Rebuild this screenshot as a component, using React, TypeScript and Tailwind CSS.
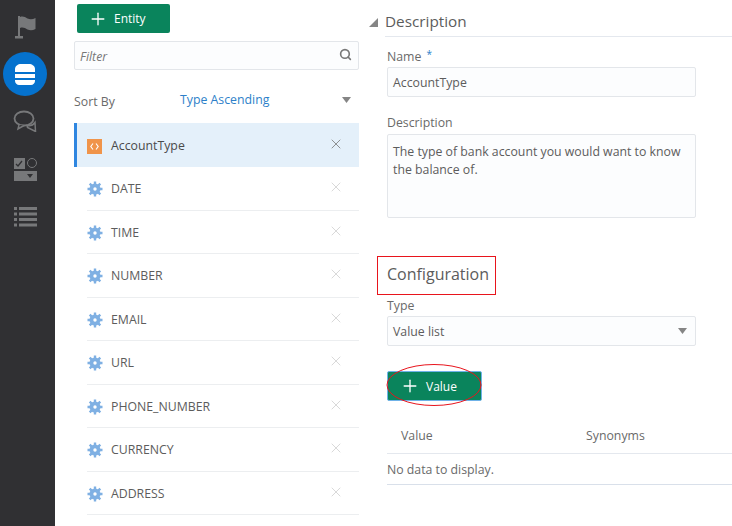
import { Plus, Search, X } from 'lucide-react'

const rows = ['DATE', 'TIME', 'NUMBER', 'EMAIL', 'URL', 'PHONE_NUMBER', 'CURRENCY', 'ADDRESS']

function Caret({ className }: { className?: string }) {
  return (
    <svg width="9" height="6" viewBox="0 0 9 6" className={className}>
      <path d="M0 0h9L4.500 6z" fill="#858585" />
    </svg>
  )
}

function Gear() {
  return (
    <svg width="16" height="16" viewBox="0 0 16 16" className="shrink-0">
      <g stroke="#7fb0e3" strokeWidth="2.400">
        <path d="M8 .5v15M.5 8h15M2.700 2.700l10.600 10.600M13.300 2.700L2.700 13.300" />
      </g>
      <circle cx="8" cy="8" r="4.200" fill="none" stroke="#7fb0e3" strokeWidth="2.600" />
      <circle cx="8" cy="8" r="1.700" fill="#fff" />
    </svg>
  )
}

function Rail() {
  return (
    <div className="w-[55px] h-full shrink-0 bg-[#303033] flex flex-col items-center pr-[5px]">
      <svg width="22" height="26" viewBox="0 0 22 26" className="mt-[14px] ml-[2px]">
        <path d="M3 2h2v20H3z" fill="#77787a" />
        <path d="M0 22h8v2.500H0z" fill="#77787a" />
        <path d="M5 3c3-1 5 0 7.500 1.500 2.500 1 5 1 8-.5v11c-3 1.500-5.500 1.500-8 .5C10 14 8 13 5 14z" fill="#77787a" />
      </svg>
      <div className="mt-[12px] w-[44px] h-[44px] rounded-full bg-[#0572ce] flex items-center justify-center">
        <svg width="20" height="21" viewBox="0 0 20 21">
          <path d="M0 5c0-3 3-5 6-5h8c3 0 6 2 6 5v3H0z" fill="#fff" />
          <path d="M0 10h20v4H0z" fill="#fff" />
          <path d="M0 16h20v1c0 2-2 4-4 4H4c-2 0-4-2-4-4z" fill="#fff" />
        </svg>
      </div>
      <svg width="24" height="22" viewBox="0 0 24 22" className="mt-[14px]">
        <ellipse cx="11" cy="8.500" rx="9.500" ry="7" fill="none" stroke="#77787a" strokeWidth="1.800" />
        <path d="M6 15l-1 4 6-3.500M14 15.500c3 .5 6 0 8-3l.5 9-8-4z" fill="#303033" stroke="#77787a" strokeWidth="1.500" />
      </svg>
      <div className="mt-[26px] flex flex-col gap-[2px]">
        <div className="flex justify-between">
          <div className="w-[11px] h-[11px] bg-[#77787a] flex items-center justify-center">
            <svg width="8" height="8" viewBox="0 0 8 8"><path d="M1 4l2 2 4-5" fill="none" stroke="#303033" strokeWidth="1.300" /></svg>
          </div>
          <div className="w-[10px] h-[10px] rounded-full border-[1.500px] border-[#77787a]" />
        </div>
        <div className="w-[23px] h-[10px] bg-[#77787a] flex items-center justify-end pr-[4px]">
          <svg width="6" height="4" viewBox="0 0 6 4"><path d="M0 0h6L3 4z" fill="#303033" /></svg>
        </div>
      </div>
      <svg width="23" height="20" viewBox="0 0 23 20" className="mt-[26px]" fill="#77787a">
        <path d="M0 0h3v3H0zM5 0h18v3H5zM0 5.500h3v3H0zM5 5.500h18v3H5zM0 11h3v3H0zM5 11h18v3H5zM0 16.500h3v3H0zM5 16.500h18v3H5z" />
      </svg>
    </div>
  )
}

function EntityRow({ name }: { name: string }) {
  return (
    <div className="h-[43.500px] ml-[13px] pt-[2px] flex items-center border-b border-[#eceef0]">
      <Gear />
      <span className="ml-[8px] flex-1 text-[12.300px] text-[#5c5c5c]">{name}</span>
      <X className="w-[16px] h-[16px] mr-[15px] -mt-[4px] text-[#cfcfcf]" strokeWidth={1.200} />
    </div>
  )
}

function EntityList() {
  return (
    <div className="ml-[19px] w-[285px] shrink-0">
      <div className="pl-[3px] pt-[4px]">
        <button className="w-[93px] h-[29px] rounded-[2px] bg-[#0a845c] flex items-center pl-[11px] text-white text-[12px] font-medium">
          <Plus className="w-[20px] h-[20px]" strokeWidth={1.600} />
          <span className="ml-[6px]">Entity</span>
        </button>
      </div>
      <div className="mt-[8px] h-[29px] rounded-[2px] border border-[#e3e6ea] bg-[#fcfdfe] flex items-center justify-between pl-[5px] pr-[6px]">
        <span className="text-[12.300px] italic text-[#777] pt-[3px]">Filter</span>
        <Search className="w-[13px] h-[13px] text-[#777] -mt-[2px]" strokeWidth={3} />
      </div>
      <div className="mt-[22px] h-[20px] flex items-center text-[12.300px]">
        <span className="text-[#6a6a6a] w-[106px]">Sort By</span>
        <span className="text-[#2d7fc9] flex-1 -mt-[3px]">Type Ascending</span>
        <Caret className="mr-[8px] -mt-[5px]" />
      </div>
      <div className="mt-[11px] h-[44px] pt-[2px] bg-[#e4f0fa] border-l-[3px] border-[#2f86e0] flex items-center">
        <div className="ml-[10px] w-[15px] h-[15px] bg-[#f0944a] flex items-center justify-center">
          <svg width="9" height="7" viewBox="0 0 9 7" fill="none" stroke="#fff" strokeWidth="1.100">
            <path d="M3 .5L.8 3.500 3 6.500M6 .5l2.200 3L6 6.500" />
          </svg>
        </div>
        <span className="ml-[9px] flex-1 text-[12.300px] text-[#4a4a4a]">AccountType</span>
        <X className="w-[16px] h-[16px] mr-[15px] -mt-[4px] text-[#777]" strokeWidth={1.200} />
      </div>
      {rows.map(r => <EntityRow key={r} name={r} />)}
    </div>
  )
}

function Details() {
  return (
    <div className="ml-[28px] flex-1 relative">
      <svg width="9" height="9" viewBox="0 0 9 9" className="absolute -left-[18px] top-[18px]">
        <path d="M9 0v9H0z" fill="#858585" />
      </svg>
      <div className="h-[37px] pt-[11px] -ml-[2px] border-b border-[#e4e8ee] text-[15.300px] leading-[21px] text-[#5c5c5c]">Description</div>
      <div className="mt-[12px] text-[12.300px] leading-[16px] text-[#6a6a6a]">
        Name <span className="ml-[2px] text-[10px] leading-[10px] text-[#2d7fc9] align-[3px]">*</span>
      </div>
      <div className="mt-[2px] w-[309px] h-[30px] pt-[2px] rounded-[2px] border border-[#e3e6ea] bg-[#fcfdfe] flex items-center px-[5px] text-[12.300px] text-[#5c5c5c]">AccountType</div>
      <div className="mt-[18px] text-[12.300px] leading-[16px] text-[#6a6a6a]">Description</div>
      <div className="mt-[3px] w-[309px] h-[84px] rounded-[2px] border border-[#e3e6ea] bg-[#fcfdfe] px-[5px] pt-[8px] text-[12.300px] leading-[17.500px] text-[#5c5c5c]">
        The type of bank account you would want to know the balance of.
      </div>
      <div className="mt-[44px] h-[24px] text-[16px] leading-[24px] text-[#5c5c5c]">Configuration</div>
      <div className="mt-[12px] text-[12.300px] leading-[16px] text-[#6a6a6a]">Type</div>
      <div className="mt-[2px] w-[309px] h-[30px] pt-[2px] rounded-[2px] border border-[#e3e6ea] bg-[#fcfdfe] flex items-center justify-between px-[5px] text-[12.300px] text-[#5c5c5c]">
        Value list
        <Caret className="mr-[3px] -mt-[2px]" />
      </div>
      <button className="mt-[25px] w-[95px] h-[30px] rounded-[2px] bg-[#0a845c] border border-[#6fb2e8] flex items-center pl-[12px] text-white text-[12px] font-medium">
        <Plus className="w-[20px] h-[20px]" strokeWidth={1.600} />
        <span className="ml-[6px] pt-[2px]">Value</span>
      </button>
      <div className="mt-[20px] h-[33px] pb-[1px] border-b border-[#e4e8ee] flex items-center text-[12.300px] text-[#6a6a6a]">
        <span className="ml-[14px] w-[185px]">Value</span>
        <span>Synonyms</span>
      </div>
      <div className="h-[31px] pt-[2px] border-b border-[#d9e0ea] flex items-center text-[12.300px] text-[#6a6a6a]">No data to display.</div>
      <div className="absolute -left-[10px] top-[256px] w-[119px] h-[39px] border border-[#e8141c]" />
      <svg width="98" height="44" viewBox="0 0 98 44" className="absolute -left-[1px] top-[364px]">
        <ellipse cx="48" cy="21" rx="47" ry="20.500" fill="none" stroke="#e8141c" strokeWidth="1" />
      </svg>
    </div>
  )
}

export default function App() {
  return (
    <div className="w-[732px] h-[526px] flex overflow-hidden bg-white font-['Open_Sans',sans-serif]">
      <Rail />
      <EntityList />
      <Details />
    </div>
  )
}
